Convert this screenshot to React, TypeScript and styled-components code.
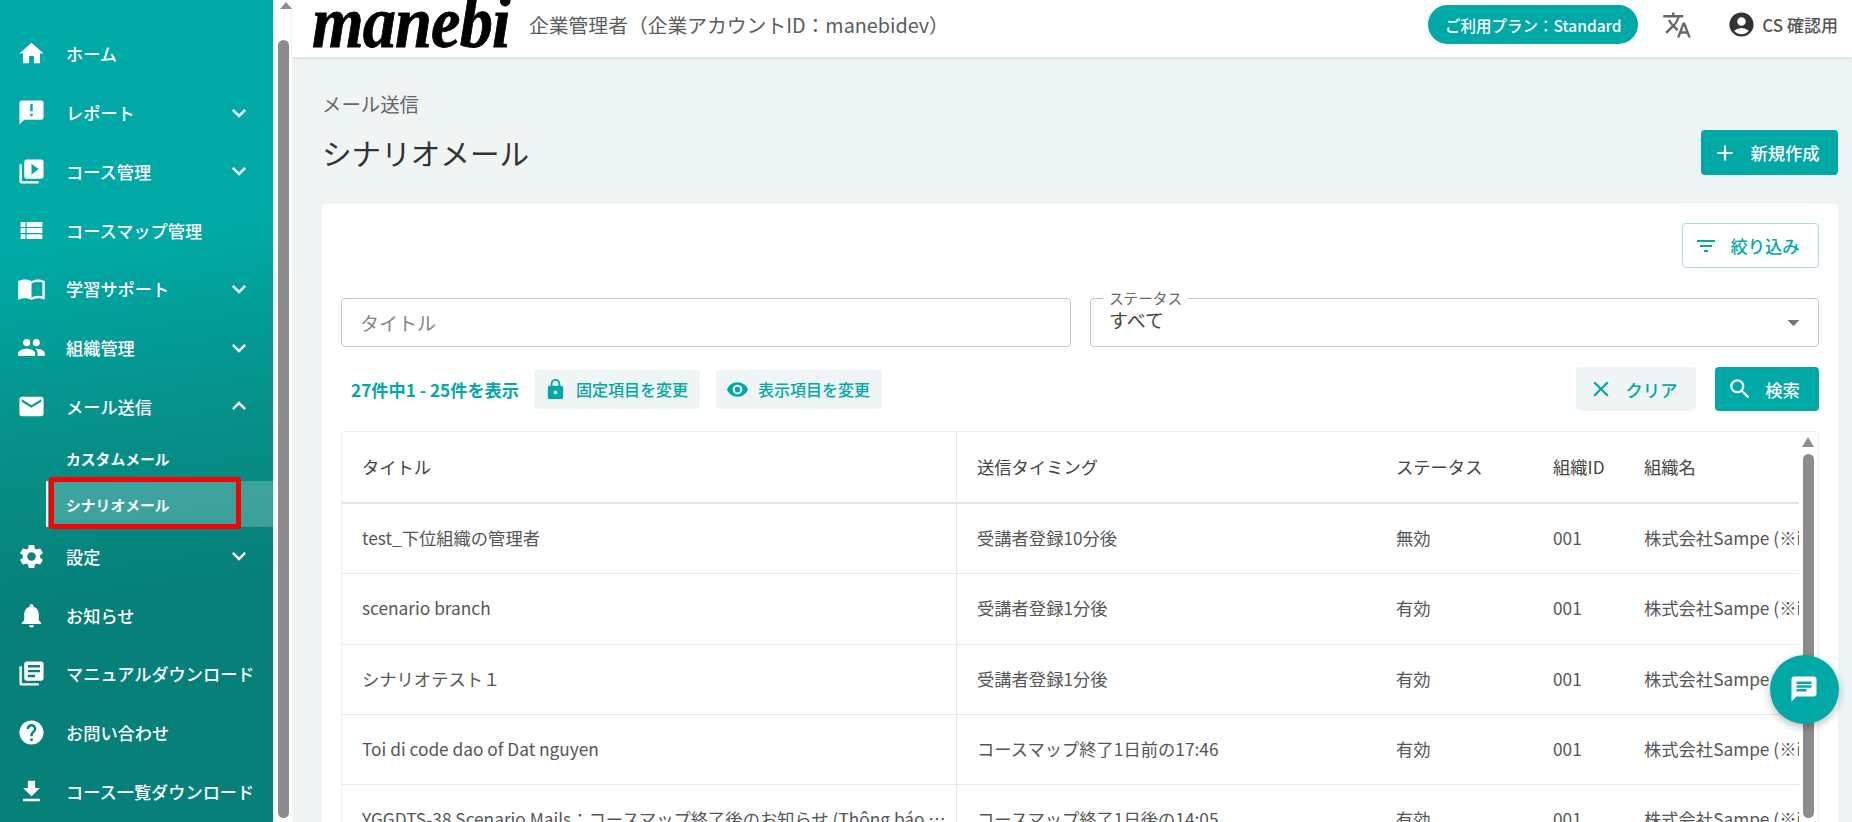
import React from "react";
import styled, { createGlobalStyle } from "styled-components";
import {
  MdAccountCircle, MdAdd, MdAnnouncement, MdArrowDropDown, MdChat, MdClose, MdEmail,
  MdExpandLess, MdExpandMore, MdFileDownload, MdFilterList, MdHelp, MdHome, MdImportContacts,
  MdLibraryBooks, MdLock, MdNotifications, MdPeople, MdSearch, MdSettings, MdTranslate,
  MdVideoLibrary, MdViewList, MdVisibility,
} from "react-icons/md";

const teal = "#00a9a5";
const pale = "#eff5f5";

const GlobalStyle = createGlobalStyle`
  html, body {
    margin: 0;
    height: 100%;
    overflow: hidden;
    font-family: "Noto Sans CJK JP", "Noto Sans", sans-serif;
    background: ${pale};
  }
`;

const Page = styled.div`
  display: flex;
  height: 100vh;
  overflow: hidden;
  position: relative;
`;

const Sidebar = styled.nav`
  width: 274px;
  flex: none;
  box-sizing: border-box;
  padding-top: 24.6px;
  border-right: 1px solid #d8eeec;
  background: linear-gradient(172deg, #00a9a5 0%, #00a9a5 30%, #069088 52%, #068079 72%, #068079 100%);
  color: #fff;
`;

const NavItem = styled.div`
  display: flex;
  align-items: center;
  height: 58.75px;
  padding-left: 17px;
  font-size: 17.2px;
  font-weight: 500;
  white-space: nowrap;
  svg.main { width: 29px; height: 29px; flex: none; margin-right: 20px; }
  svg.chev { width: 28px; height: 28px; position: absolute; left: 225px; }
`;

const SubItem = styled.div<{ $active?: boolean }>`
  display: flex;
  align-items: center;
  height: 45.6px;
  margin-left: 46px;
  padding-left: 18px;
  font-size: 14.8px;
  font-weight: 700;
  position: relative;
  background: ${(p) => (p.$active ? "rgba(255,255,255,.22)" : "transparent")};
  border-left: 2px solid ${(p) => (p.$active ? "#e4f2f1" : "transparent")};
`;

const RedMark = styled.span`
  position: absolute;
  left: 1px;
  top: -4px;
  width: 192px;
  height: 52px;
  box-sizing: border-box;
  border: 5px solid #f00;
  border-radius: 2px;
`;

const PageScroll = styled.div`
  width: 18px;
  flex: none;
  background: #fff;
  padding: 40px 0 4px 4px;
  box-sizing: border-box;
  position: relative;
  &::before {
    content: "";
    position: absolute;
    top: -4px;
    left: 6px;
    border: 6px solid transparent;
    border-bottom: 7px solid #8c8c8c;
  }
`;

const Thumb = styled.div`
  width: 11px;
  height: 100%;
  border-radius: 6px;
  background: #8c8c8c;
`;

const Main = styled.main`
  flex: 1;
  min-width: 0;
  display: flex;
  flex-direction: column;
`;

const TopBar = styled.header`
  height: 57px;
  flex: none;
  display: flex;
  align-items: center;
  background: #fff;
  box-shadow: 0 1px 4px rgba(0, 0, 0, .12);
  padding: 0 14px 8px 20px;
  box-sizing: border-box;
  position: relative;
`;

const Logo = styled.div`
  font-family: "Liberation Serif", serif;
  font-style: italic;
  font-weight: 700;
  font-size: 73px;
  line-height: 57px;
  letter-spacing: -1px;
  color: #000;
  width: 217px;
  transform: scaleX(.91);
  transform-origin: left center;
  -webkit-text-stroke: .8px #000;
  margin-top: -4px;
`;

const Tenant = styled.div`
  font-size: 19.8px;
  color: #5c5c5c;
  flex: 1;
  white-space: nowrap;
`;

const PlanPill = styled.div`
  height: 39px;
  width: 210px;
  border-radius: 20px;
  background: ${teal};
  color: #fff;
  font-size: 15.5px;
  font-weight: 500;
  display: flex;
  align-items: center;
  justify-content: center;
  margin-right: 24px;
`;

const TranslateIcon = styled(MdTranslate)`
  width: 30px;
  height: 30px;
  color: #666;
  margin-right: 35px;
`;

const Account = styled.div`
  display: flex;
  align-items: center;
  gap: 6px;
  font-size: 17px;
  font-weight: 500;
  color: #555;
  white-space: nowrap;
  svg { width: 29px; height: 29px; color: #333; }
`;

const Content = styled.div`
  flex: 1;
  min-height: 0;
  padding: 33px 14px 0 30px;
  display: flex;
  flex-direction: column;
`;

const Breadcrumb = styled.div`
  font-size: 19.4px;
  line-height: 28px;
  color: #666;
  margin-bottom: 12px;
`;

const TitleRow = styled.div`
  display: flex;
  justify-content: space-between;
  align-items: center;
  height: 45px;
  margin-bottom: 29px;
`;

const Title = styled.h1`
  margin: 0;
  font-size: 29.6px;
  font-weight: 400;
  color: #333;
`;

const Button = styled.button<{ $variant: "solid" | "soft" | "outline"; $w: number; $h: number }>`
  display: inline-flex;
  align-items: center;
  justify-content: center;
  gap: 12px;
  width: ${(p) => p.$w}px;
  height: ${(p) => p.$h}px;
  flex: none;
  padding: 0 7px 0 0;
  border-radius: 4px;
  font-family: inherit;
  font-size: 17.3px;
  font-weight: 500;
  box-sizing: border-box;
  border: ${(p) => (p.$variant === "outline" ? "1px solid #a8dfdd" : "none")};
  color: ${(p) => (p.$variant === "solid" ? "#fff" : teal)};
  background: ${(p) => (p.$variant === "solid" ? teal : p.$variant === "soft" ? pale : "#fff")};
  svg { flex: none; }
`;

const Card = styled.section`
  flex: 1;
  min-height: 0;
  background: #fff;
  border-radius: 4px 4px 0 0;
  padding: 19px 19px 0 19px;
  display: flex;
  flex-direction: column;
`;

const FilterRow = styled.div`
  display: flex;
  justify-content: flex-end;
  margin-bottom: 30px;
`;

const FormRow = styled.div`
  display: grid;
  grid-template-columns: 730px 1fr;
  gap: 19px;
  margin-bottom: 20px;
`;

const Field = styled.div`
  height: 49px;
  box-sizing: border-box;
  border: 1px solid #c4c4c4;
  border-radius: 4px;
  display: flex;
  align-items: center;
  justify-content: space-between;
  padding: 0 10px 0 18px;
  font-size: 19px;
  color: #444;
  position: relative;
  svg { width: 29px; height: 29px; color: #757575; }
`;

const Placeholder = styled.span`
  color: #858585;
`;

const SelectValue = styled.span`
  margin-bottom: 6px;
`;

const FloatLabel = styled.span`
  position: absolute;
  left: 12px;
  top: -9px;
  padding: 0 6px;
  background: #fff;
  font-size: 14.6px;
  line-height: 16px;
  color: #666;
`;

const ActionRow = styled.div`
  display: flex;
  align-items: center;
  height: 44px;
  margin-bottom: 20px;
`;

const Count = styled.span`
  margin-left: 10px;
  margin-right: 15px;
  font-size: 17.2px;
  font-weight: 700;
  color: ${teal};
  white-space: nowrap;
`;

const ColumnButton = styled.button`
  display: inline-flex;
  align-items: center;
  gap: 9px;
  height: 39px;
  width: 166px;
  margin-right: 16px;
  padding: 0 0 0 10px;
  box-sizing: border-box;
  border: none;
  border-radius: 4px;
  background: ${pale};
  color: ${teal};
  font-family: inherit;
  font-size: 16px;
  font-weight: 500;
  white-space: nowrap;
  svg { width: 23px; height: 23px; flex: none; }
`;

const Spacer = styled.div`
  flex: 1;
`;

const ButtonGap = styled.div`
  width: 19px;
  flex: none;
`;

const TableFrame = styled.div`
  flex: 1;
  min-height: 0;
  display: flex;
  border: 1px solid #eee;
  border-bottom: none;
  border-radius: 4px 4px 0 0;
  overflow: hidden;
`;

const TableClip = styled.div`
  flex: 1;
  min-width: 0;
  overflow: hidden;
`;

const Table = styled.table`
  width: 100%;
  table-layout: fixed;
  border-collapse: separate;
  border-spacing: 0;
  font-size: 17.3px;
  color: #555;
`;

const Th = styled.th<{ $w?: number; $split?: boolean }>`
  width: ${(p) => (p.$w ? `${p.$w}px` : "auto")};
  height: 72px;
  box-sizing: border-box;
  padding: 0 0 1px 20px;
  text-align: left;
  font-weight: 400;
  color: #444;
  white-space: nowrap;
  overflow: hidden;
  border-bottom: 2px solid #e4e4e4;
  border-right: ${(p) => (p.$split ? "1px solid #eaeaea" : "none")};
`;

const Td = styled.td<{ $split?: boolean }>`
  height: 70.3px;
  box-sizing: border-box;
  padding: 0 0 2px 20px;
  white-space: nowrap;
  overflow: hidden;
  text-overflow: ${(p) => (p.$split ? "ellipsis" : "clip")};
  border-bottom: 1px solid #e8e8e8;
  border-right: ${(p) => (p.$split ? "1px solid #eaeaea" : "none")};
`;

const TitleCell = styled(Td)`
  padding-right: 8px;
`;

const TableScroll = styled.div`
  width: 19px;
  flex: none;
  box-sizing: border-box;
  padding: 22px 4px 4px 4px;
  position: relative;
  &::before {
    content: "";
    position: absolute;
    top: 5px;
    left: 3px;
    border: 6.5px solid transparent;
    border-bottom: 10px solid #8c8c8c;
    border-top: none;
  }
`;

const ChatFab = styled.div`
  position: absolute;
  left: 1769.5px;
  top: 654.5px;
  width: 69px;
  height: 69px;
  border-radius: 50%;
  background: ${teal};
  box-shadow: 0 3px 8px rgba(0, 0, 0, .28);
  display: flex;
  align-items: center;
  justify-content: center;
  color: #fff;
  svg { width: 30px; height: 30px; }
`;

type NavEntry = { icon: React.ComponentType<{ className?: string }>; label: string; chevron?: "down" | "up" };

const navTop: NavEntry[] = [
  { icon: MdHome, label: "ホーム" },
  { icon: MdAnnouncement, label: "レポート", chevron: "down" },
  { icon: MdVideoLibrary, label: "コース管理", chevron: "down" },
  { icon: MdViewList, label: "コースマップ管理" },
  { icon: MdImportContacts, label: "学習サポート", chevron: "down" },
  { icon: MdPeople, label: "組織管理", chevron: "down" },
  { icon: MdEmail, label: "メール送信", chevron: "up" },
];

const navBottom: NavEntry[] = [
  { icon: MdSettings, label: "設定", chevron: "down" },
  { icon: MdNotifications, label: "お知らせ" },
  { icon: MdLibraryBooks, label: "マニュアルダウンロード" },
  { icon: MdHelp, label: "お問い合わせ" },
  { icon: MdFileDownload, label: "コース一覧ダウンロード" },
];

const rows = [
  ["test_下位組織の管理者", "受講者登録10分後", "無効"],
  ["scenario branch", "受講者登録1分後", "有効"],
  ["シナリオテスト１", "受講者登録1分後", "有効"],
  ["Toi di code dao of Dat nguyen", "コースマップ終了1日前の17:46", "有効"],
  ["YGGDTS-38 Scenario Mails：コースマップ終了後のお知らせ (Thông báo sau khi kết thúc)", "コースマップ終了1日後の14:05", "有効"],
];

const NavRow = ({ entry }: { entry: NavEntry }) => {
  const Icon = entry.icon;
  return (
    <NavItem>
      <Icon className="main" />
      {entry.label}
      {entry.chevron === "down" && <MdExpandMore className="chev" />}
      {entry.chevron === "up" && <MdExpandLess className="chev" />}
    </NavItem>
  );
};

export default function App() {
  return (
    <Page>
      <GlobalStyle />
      <Sidebar>
        {navTop.map((n) => <NavRow key={n.label} entry={n} />)}
        <SubItem>カスタムメール</SubItem>
        <SubItem $active>シナリオメール<RedMark /></SubItem>
        {navBottom.map((n) => <NavRow key={n.label} entry={n} />)}
      </Sidebar>
      <PageScroll><Thumb /></PageScroll>
      <Main>
        <TopBar>
          <Logo>manebi</Logo>
          <Tenant>企業管理者（企業アカウントID：manebidev）</Tenant>
          <PlanPill>ご利用プラン：Standard</PlanPill>
          <TranslateIcon />
          <Account><MdAccountCircle />CS 確認用</Account>
        </TopBar>
        <Content>
          <Breadcrumb>メール送信</Breadcrumb>
          <TitleRow>
            <Title>シナリオメール</Title>
            <Button $variant="solid" $w={137} $h={45}><MdAdd size={26} />新規作成</Button>
          </TitleRow>
          <Card>
            <FilterRow>
              <Button $variant="outline" $w={137} $h={45}><MdFilterList size={24} />絞り込み</Button>
            </FilterRow>
            <FormRow>
              <Field><Placeholder>タイトル</Placeholder></Field>
              <Field>
                <FloatLabel>ステータス</FloatLabel>
                <SelectValue>すべて</SelectValue>
                <MdArrowDropDown />
              </Field>
            </FormRow>
            <ActionRow>
              <Count>27件中1 - 25件を表示</Count>
              <ColumnButton><MdLock />固定項目を変更</ColumnButton>
              <ColumnButton><MdVisibility />表示項目を変更</ColumnButton>
              <Spacer />
              <Button $variant="soft" $w={120} $h={44}><MdClose size={26} />クリア</Button>
              <ButtonGap />
              <Button $variant="solid" $w={104} $h={44}><MdSearch size={26} />検索</Button>
            </ActionRow>
            <TableFrame>
              <TableClip>
                <Table>
                  <thead>
                    <tr>
                      <Th $w={615} $split>タイトル</Th>
                      <Th $w={419}>送信タイミング</Th>
                      <Th $w={157}>ステータス</Th>
                      <Th $w={91}>組織ID</Th>
                      <Th>組織名</Th>
                    </tr>
                  </thead>
                  <tbody>
                    {rows.map((r) => (
                      <tr key={r[0]}>
                        <TitleCell $split>{r[0]}</TitleCell>
                        <Td>{r[1]}</Td>
                        <Td>{r[2]}</Td>
                        <Td>001</Td>
                        <Td>株式会社Sampe (※i</Td>
                      </tr>
                    ))}
                  </tbody>
                </Table>
              </TableClip>
              <TableScroll><Thumb /></TableScroll>
            </TableFrame>
          </Card>
        </Content>
      </Main>
      <ChatFab><MdChat /></ChatFab>
    </Page>
  );
}
